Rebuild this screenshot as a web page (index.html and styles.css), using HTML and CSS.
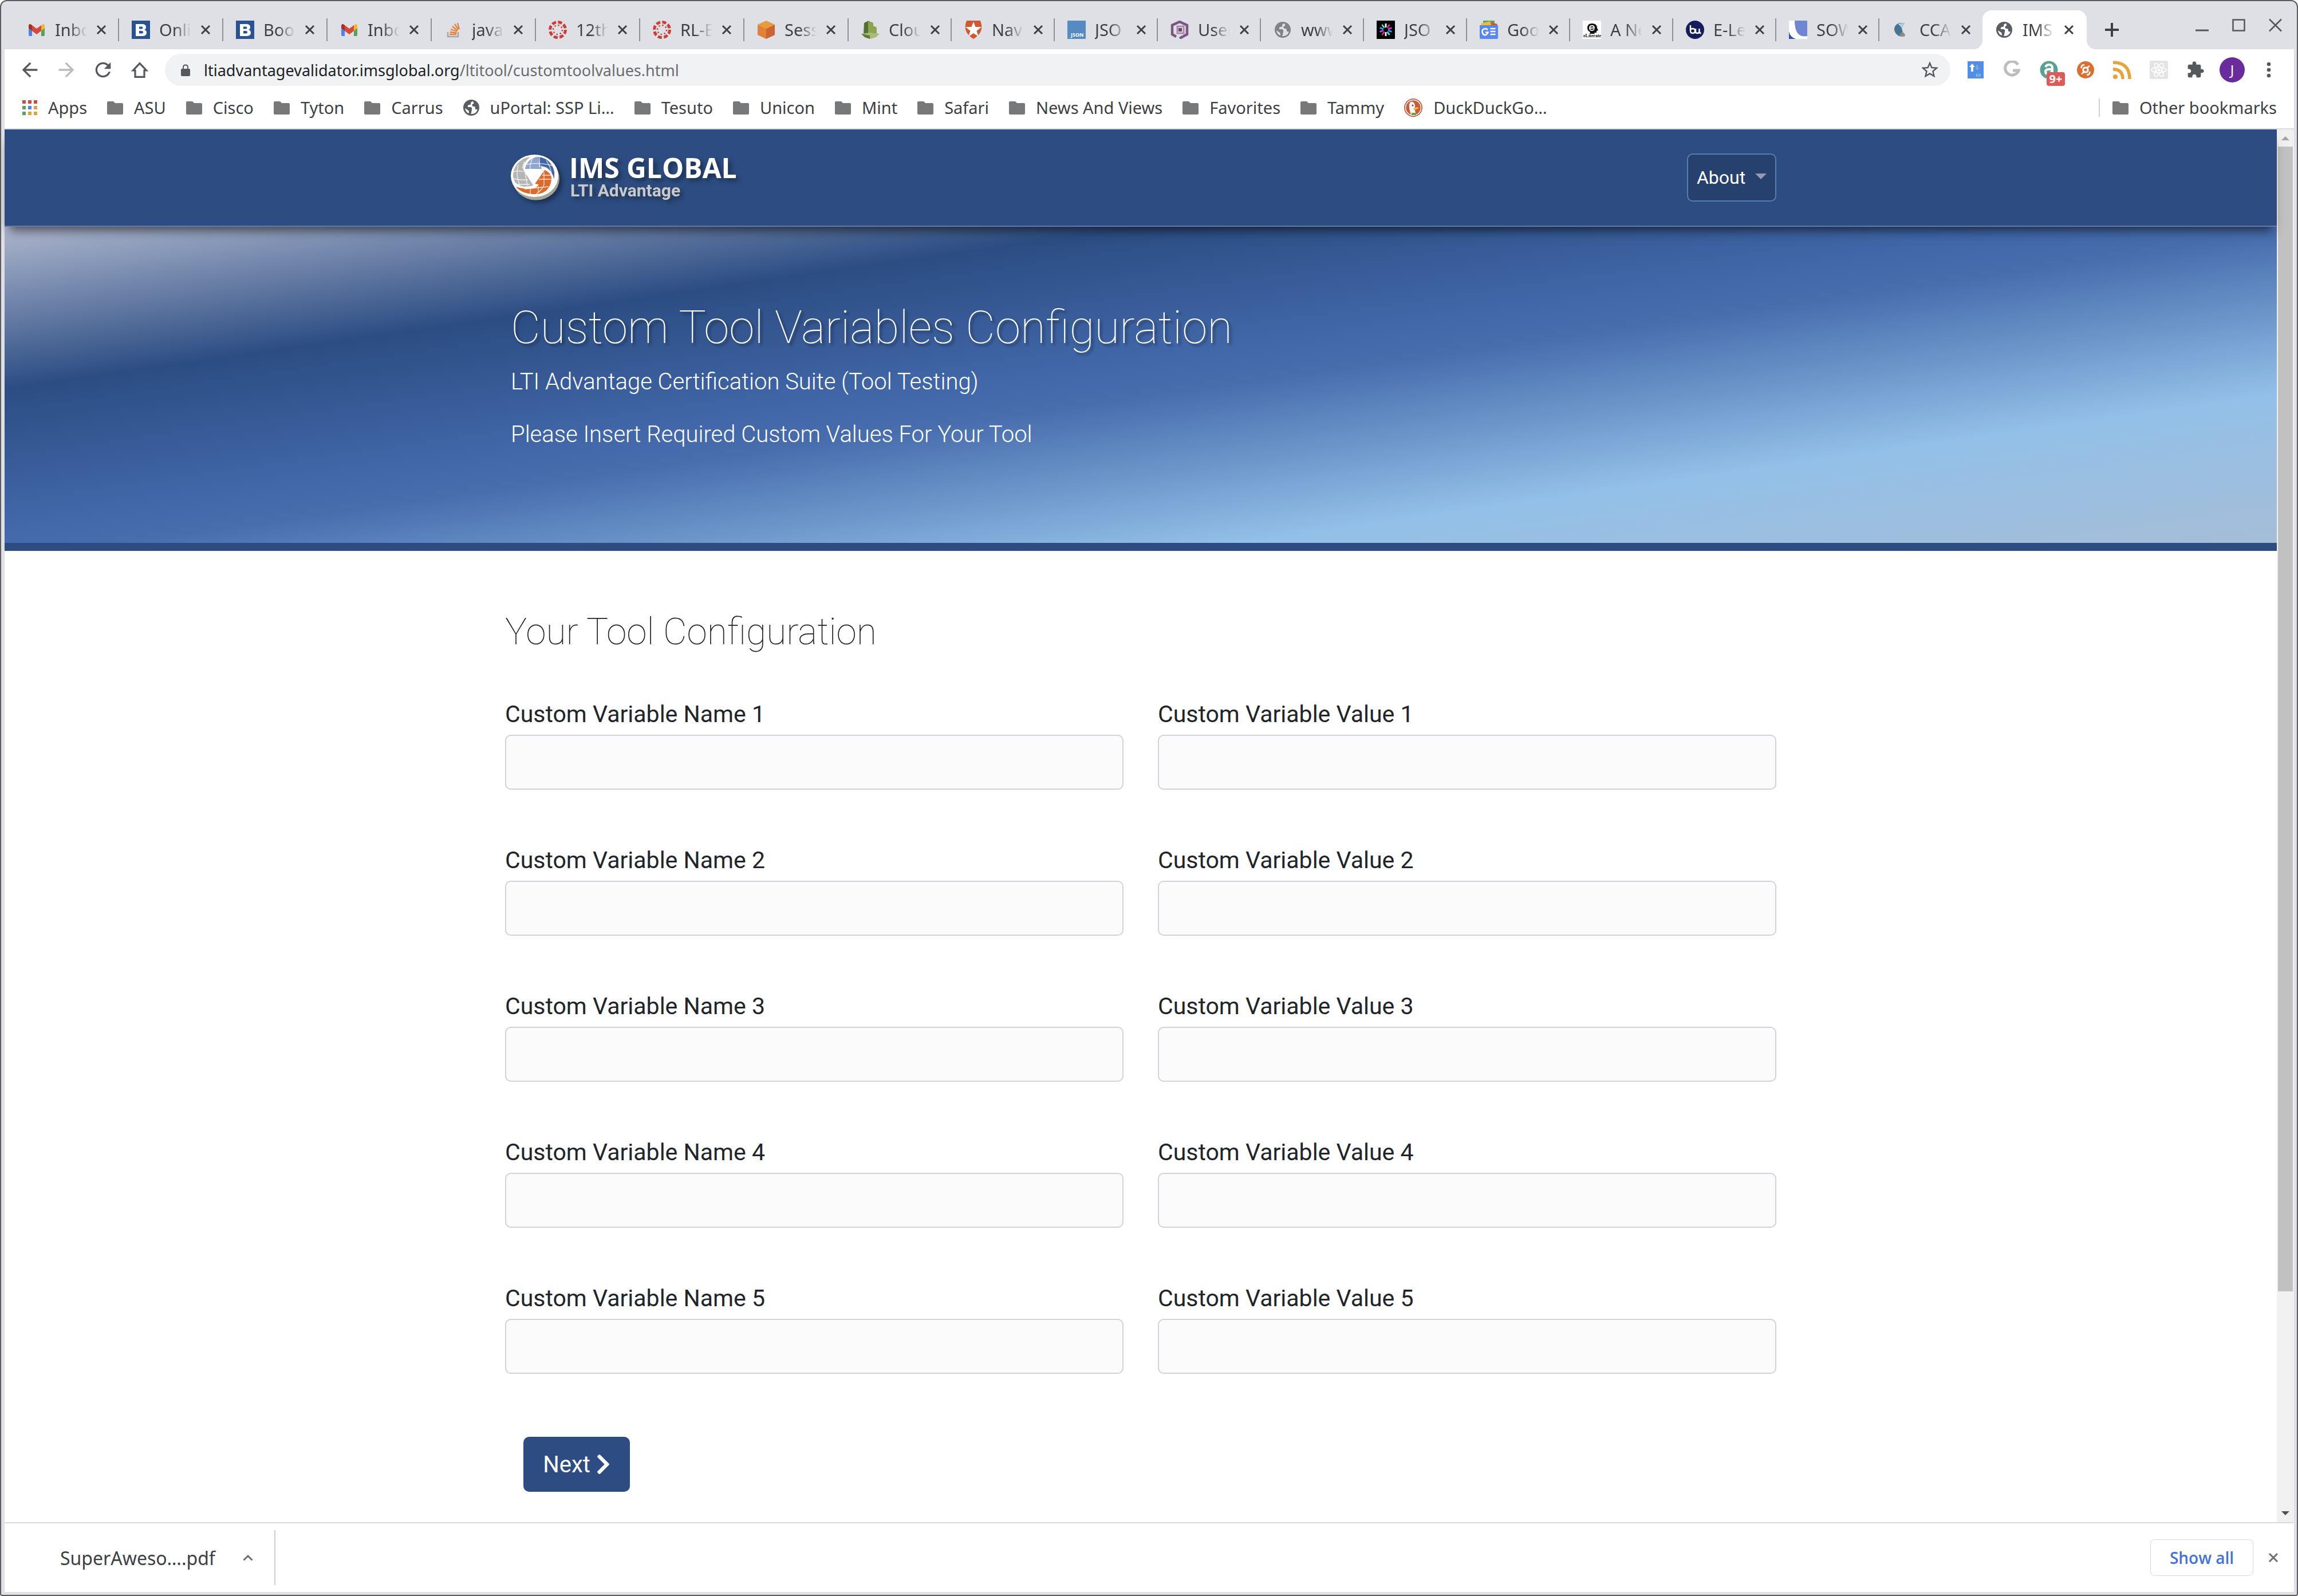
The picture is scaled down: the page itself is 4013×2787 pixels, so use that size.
FILE: index.html
```html
<!DOCTYPE html>
<html lang="en">
<head>
<meta charset="utf-8">
<title>IMS Global LTI Advantage</title>
<link rel="stylesheet" href="styles.css">
</head>
<body>
<svg class="defs" aria-hidden="true">
  <symbol id="x" viewBox="0 0 18 18"><path d="M2 2l14 14M16 2L2 16" stroke="currentColor" stroke-width="3" fill="none"/></symbol>
  <symbol id="gmail" viewBox="0 0 32 32"><path d="M2 8v17q0 2 2 2h4V13z" fill="#4f83ee"/><path d="M30 8v17q0 2-2 2h-4V13z" fill="#58a15a"/><path d="M24 8l3-2q3 0 3 3v4l-6 5z" fill="#ecb92f"/><path d="M8 8L5 6Q2 6 2 9v4l6 5z" fill="#b02a23"/><path d="M8 8l8 6 8-6v10l-8 6-8-6z" fill="#d44a3c"/></symbol>
  <symbol id="bb" viewBox="0 0 32 32"><path d="M0 0h32v32H0z" fill="#2b5290"/><path fill-rule="evenodd" d="M7 6h11q7 0 7 5.500 0 3.500-3 4.500 4 1 4 5 0 6-8 6H7zM13 10.500v4h4q2.500 0 2.500-2t-2.500-2zM13 18v4.500h4q3 0 3-2.200T17 18z" fill="#fff"/></symbol>
  <symbol id="so" viewBox="0 0 32 32"><path d="M6 20v8h18v-8" stroke="#a3a6ab" stroke-width="2.500" fill="none"/><path d="M9 24h12M9.500 20l12 1.500M11 15l11 4M14 10l9 7.500M18 6l6.500 9.500M23 4l3 11" stroke="#e0853a" stroke-width="2.300"/></symbol>
  <symbol id="canvas" viewBox="0 0 32 32"><circle cx="16" cy="16" r="13.500" fill="none" stroke="#c93f35" stroke-width="5" stroke-dasharray="7.200 3.400"/><circle cx="16" cy="16" r="8" fill="none" stroke="#c93f35" stroke-width="2.500" stroke-dasharray="2.500 3.780"/></symbol>
  <symbol id="aws" viewBox="0 0 32 32"><path d="M16 0l15 7-15 7L1 7z" fill="#e99a3c"/><path d="M1 7l15 7v18L1 25z" fill="#df8136"/><path d="M31 7l-15 7v18l15-7z" fill="#cd6330"/></symbol>
  <symbol id="cloud9" viewBox="0 0 32 32"><path d="M5 4l8-4v24l-9-1z" fill="#56702f"/><path d="M12 0l9 4v5l6 3v12H12z" fill="#8aa64f"/><path d="M0 23l15-2 17 2-6 6-10 3-9-3z" fill="#a9bd7b"/><path d="M0 23l15 3v6l-9-3z" fill="#5f7a36"/></symbol>
  <symbol id="auth0" viewBox="0 0 32 32"><path d="M4 0h24q8 20-12 32Q-4 20 4 0z" fill="#d4582f"/><path d="M16 2l3.500 9H30l-8.500 7 3.500 10-9-6-9 6 3.500-10L2 11h10.500z" fill="#fff"/></symbol>
  <symbol id="hex" viewBox="0 0 32 32"><path d="M10 28L3 24V8l13-6 13 6v16l-13 7" fill="none" stroke="#7c5683" stroke-width="4.500"/><path d="M12 10h11v12H12z" fill="none" stroke="#a98bab" stroke-width="3"/><path d="M14 13h6v6h-6z" fill="#7a3d68"/></symbol>
  <symbol id="globe" viewBox="0 0 28 28"><circle cx="14" cy="14" r="14" fill="currentColor"/><path d="M17 3q-3 0-4 3 1 3-2 3-4 0-3 4h5q3 1 2 4l-1 6-1 2q9 1 12-8-3 1-4-1-1-3 0-4-3 1-5-1-2-3 2-4 1-1-1-4z" fill="var(--bg)"/><path d="M3 15l6 4q1 1 1 5-6-2-7-9z" fill="var(--bg)"/></symbol>
  <symbol id="jwt" viewBox="0 0 32 32"><path d="M0 0h32v32H0z" fill="#000"/><g stroke-width="2.800"><path d="M16 5v7M16 20v7" stroke="#fff"/><path d="M22.500 7l-4 5.500M9.500 25l4-5.500" stroke="#e0306b"/><path d="M26.500 12.500L20 15M5.500 19.500L12 17" stroke="#d63aff"/><path d="M26.500 19.500L20 17M5.500 12.500L12 15" stroke="#29a8e8"/><path d="M22.500 25l-4-5.500M9.500 7l4 5.500" stroke="#3fe5d8"/></g></symbol>
  <symbol id="gnews" viewBox="0 0 32 32"><path d="M6 0h20v9H6z" fill="#5ba25c"/><path d="M2 5l16-4 3 10H4z" fill="#ecbd3c"/><path d="M20 3l11 3-2 5h-9z" fill="#d8503f"/><path d="M0 8h32v22q0 2-2 2H2q-2 0-2-2z" fill="#5a87ee"/><path d="M18.500 14h9M18.500 19h9M18.500 24h9" stroke="#fff" stroke-width="2.600"/><path d="M14 16q-3-3-6.500-1.500T4.500 20t4 5 6-4.500H10" stroke="#fff" stroke-width="2.500" fill="none"/></symbol>
  <symbol id="bu" viewBox="0 0 32 32"><circle cx="16" cy="16" r="16" fill="#141c5c"/><path d="M8 8v10q0 4 4 4t4-4-4-4-4 3M17 14v5q0 3 3 3t3.500-3v-5 5q0 3 3 3" fill="none" stroke="#fff" stroke-width="2.400"/></symbol>
  <symbol id="sow" viewBox="0 0 32 32"><path d="M0 0h32v32H0z" fill="#fff"/><path d="M10 0h22v27q-22 4-22-27z" fill="#6f86d3"/><path d="M0 19q2 10 12 13H0z" fill="#3350aa"/></symbol>
  <symbol id="cc" viewBox="0 0 32 32"><path d="M12 4l10 0-5 9 2 8-7 6Q4 22 4 15T12 4z" fill="#47748e"/><path d="M10 5l12-1-5 9q-4-5-7-8z" fill="#a9d0e8"/><path d="M12 27l5-7q6 1 6 7-5 2-11 0z" fill="#8f8b8c"/></symbol>
  <symbol id="folder" viewBox="0 0 28 23"><path d="M2 0h9l3 3h12q2 0 2 2v16q0 2-2 2H2q-2 0-2-2V2q0-2 2-2z" fill="#777879"/></symbol>
</svg>

<div class="browser">
  <header class="chrome">
    <div class="tabstrip">
      <nav class="tabs" aria-label="Open tabs">
        <div class="tab"><a href="#"><svg><use href="#gmail"/></svg><span>Inbo</span></a><button aria-label="Close"><svg><use href="#x"/></svg></button></div>
        <div class="tab"><a href="#"><svg><use href="#bb"/></svg><span>Onlin</span></a><button aria-label="Close"><svg><use href="#x"/></svg></button></div>
        <div class="tab"><a href="#"><svg><use href="#bb"/></svg><span>Boo</span></a><button aria-label="Close"><svg><use href="#x"/></svg></button></div>
        <div class="tab"><a href="#"><svg><use href="#gmail"/></svg><span>Inbo</span></a><button aria-label="Close"><svg><use href="#x"/></svg></button></div>
        <div class="tab"><a href="#"><svg><use href="#so"/></svg><span>java</span></a><button aria-label="Close"><svg><use href="#x"/></svg></button></div>
        <div class="tab"><a href="#"><svg><use href="#canvas"/></svg><span>12th</span></a><button aria-label="Close"><svg><use href="#x"/></svg></button></div>
        <div class="tab"><a href="#"><svg><use href="#canvas"/></svg><span>RL-E</span></a><button aria-label="Close"><svg><use href="#x"/></svg></button></div>
        <div class="tab"><a href="#"><svg><use href="#aws"/></svg><span>Sess</span></a><button aria-label="Close"><svg><use href="#x"/></svg></button></div>
        <div class="tab tab-slim"><a href="#"><svg><use href="#cloud9"/></svg><span>Clou</span></a><button aria-label="Close"><svg><use href="#x"/></svg></button></div>
        <div class="tab tab-slim"><a href="#"><svg><use href="#auth0"/></svg><span>Nav</span></a><button aria-label="Close"><svg><use href="#x"/></svg></button></div>
        <div class="tab tab-slim"><a href="#"><svg viewBox="0 0 32 32"><path d="M0 0h32v32H0z" fill="#548cc1"/><text x="6" y="28" font-family="Open Sans, sans-serif" font-weight="700" font-size="9" fill="#fff">JSON</text></svg><span>JSO</span></a><button aria-label="Close"><svg><use href="#x"/></svg></button></div>
        <div class="tab tab-slim"><a href="#"><svg><use href="#hex"/></svg><span>User</span></a><button aria-label="Close"><svg><use href="#x"/></svg></button></div>
        <div class="tab tab-slim"><a href="#"><svg class="globe globe-tab"><use href="#globe"/></svg><span>www</span></a><button aria-label="Close"><svg><use href="#x"/></svg></button></div>
        <div class="tab tab-slim"><a href="#"><svg><use href="#jwt"/></svg><span>JSO</span></a><button aria-label="Close"><svg><use href="#x"/></svg></button></div>
        <div class="tab tab-slim"><a href="#"><svg><use href="#gnews"/></svg><span>Goo</span></a><button aria-label="Close"><svg><use href="#x"/></svg></button></div>
        <div class="tab tab-slim"><a href="#"><svg viewBox="0 0 32 32"><path d="M0 0h32v32H0z" fill="#fff"/><path d="M16 5q9 0 9 8l2 4-3 1v3h-4l1 2h-9l1-3q-5-2-5-7 0-8 8-8z" fill="#111"/><path d="M12 13h8q0-4-4-4t-4 4 4 4q3 0 4-2" fill="none" stroke="#fff" stroke-width="1.800"/><text x="1" y="29" font-family="Liberation Serif, serif" font-weight="700" font-size="8" fill="#111">eLiterate</text></svg><span>A Ne</span></a><button aria-label="Close"><svg><use href="#x"/></svg></button></div>
        <div class="tab tab-slim"><a href="#"><svg><use href="#bu"/></svg><span>E-Le</span></a><button aria-label="Close"><svg><use href="#x"/></svg></button></div>
        <div class="tab tab-slim"><a href="#"><svg><use href="#sow"/></svg><span>SOW</span></a><button aria-label="Close"><svg><use href="#x"/></svg></button></div>
        <div class="tab tab-slim tab-last"><a href="#"><svg><use href="#cc"/></svg><span>CCA</span></a><button aria-label="Close"><svg><use href="#x"/></svg></button></div>
        <div class="tab tab-active"><a href="#"><svg class="globe globe-active"><use href="#globe"/></svg><span>IMS</span></a><button aria-label="Close"><svg><use href="#x"/></svg></button></div>
      </nav>
      <button class="newtab" aria-label="New tab"><svg viewBox="0 0 24 24"><path d="M12 0v24M0 12h24" stroke="#3c3f43" stroke-width="4"/></svg></button>
      <div class="wincontrols">
        <button aria-label="Minimize"><svg viewBox="0 0 24 24"><path d="M0 21h23" stroke="#54575b" stroke-width="3"/></svg></button>
        <button aria-label="Maximize"><svg viewBox="0 0 24 24"><path d="M1.500 2.500h20v19h-20z" stroke="#54575b" stroke-width="2.500" fill="none"/></svg></button>
        <button aria-label="Close window"><svg viewBox="0 0 24 24"><path d="M1 1.500l21 21M22 1.500l-21 21" stroke="#54575b" stroke-width="2.500"/></svg></button>
      </div>
    </div>

    <div class="toolbar">
      <button aria-label="Back"><svg class="ico" viewBox="0 0 24 24"><path fill="#55585c" d="M20 11H7.830l5.590-5.590L12 4l-8 8 8 8 1.410-1.410L7.830 13H20v-2z"/></svg></button>
      <button aria-label="Forward"><svg class="ico" viewBox="0 0 24 24"><path fill="#b9bbbe" d="M12 4l-1.410 1.410L16.170 11H4v2h12.170l-5.580 5.590L12 20l8-8z"/></svg></button>
      <button aria-label="Reload"><svg class="ico" viewBox="0 0 24 24"><path fill="#55585c" d="M17.650 6.350C16.200 4.900 14.210 4 12 4c-4.420 0-7.990 3.580-7.990 8s3.570 8 7.990 8c3.730 0 6.840-2.550 7.730-6h-2.080c-.82 2.330-3.040 4-5.650 4-3.310 0-6-2.690-6-6s2.690-6 6-6c1.660 0 3.140.69 4.220 1.780L13 11h7V4l-2.350 2.350z"/></svg></button>
      <button aria-label="Home"><svg class="ico" viewBox="0 0 24 24"><path fill="none" stroke="#55585c" stroke-width="1.900" d="M12 5.200L5 12.600h2.200v6.800h9.600v-6.800H19z"/></svg></button>
      <div class="omnibox">
        <svg class="lock" viewBox="0 0 16 21"><path d="M4 9V5.500q0-4 4-4t4 4V9" fill="none" stroke="#55585c" stroke-width="2"/><rect y="8" width="16" height="13" rx="2" fill="#55585c"/></svg>
        <div class="url" role="textbox" aria-label="Address"><span>ltiadvantagevalidator.imsglobal.org</span>/ltitool/customtoolvalues.html</div>
        <button aria-label="Bookmark this page"><svg class="star" viewBox="0 0 24 24"><path fill="#55585c" d="M22 9.240l-7.190-.62L12 2 9.190 8.630 2 9.240l5.460 4.730L5.820 21 12 17.270 18.180 21l-1.630-7.030L22 9.240zM12 15.400l-3.760 2.270 1-4.280-3.320-2.880 4.380-.38L12 6.100l1.710 4.040 4.380.38-3.320 2.880 1 4.280L12 15.400z"/></svg></button>
      </div>
      <button aria-label="Sort extension"><svg class="ext" viewBox="0 0 32 32"><path d="M2 1h28v30H2z" fill="#4f8fe8"/><path d="M8 19V11H5l5-6 5 6h-3v8z" fill="#fff"/><path d="M17 7h3v5h3l-4 5-4-5h2z" fill="#8aa4bd"/><text x="16" y="28" font-family="Open Sans, sans-serif" font-size="8" fill="#cfe0fa">EX</text></svg></button>
      <button aria-label="G extension"><svg class="ext" viewBox="0 0 32 32"><path d="M26 7A12 12 0 1 0 27 17H17" fill="none" stroke="#bdbdbd" stroke-width="5"/></svg></button>
      <button class="badged" aria-label="Honey extension"><svg class="ext" viewBox="0 0 32 32"><circle cx="16" cy="16" r="15.500" fill="#57a293"/><path d="M10 11q2-4 6-4 6 0 6 6v11M21 15q-11-1-11 4 0 4 4 4 6 0 7-5" fill="none" stroke="#fff" stroke-width="4"/></svg><span class="badge">9+</span></button>
      <button aria-label="Circle extension"><svg class="ext" viewBox="0 0 32 32"><circle cx="16" cy="16" r="15" fill="#db6f2f"/><rect x="12" y="12" width="8" height="8" rx="3" fill="none" stroke="#fff" stroke-width="3"/><path d="M8 13l2-5 4-1M24 19l-2 5-4 1M9 23l4-3M23 9l-4 3" fill="none" stroke="#fff" stroke-width="2.500"/></svg></button>
      <button aria-label="Feed"><svg class="ext" viewBox="0 0 32 32"><circle cx="4" cy="28" r="4" fill="#e6a33c"/><path d="M0 15q17 0 17 17M0 3q29 0 29 29" fill="none" stroke="#e6a33c" stroke-width="5.500"/></svg></button>
      <button aria-label="React tools"><svg class="ext" viewBox="0 0 32 32"><rect width="32" height="32" rx="2" fill="#e3e3e3"/><g fill="none" stroke="#fff" stroke-width="1.600"><ellipse cx="16" cy="16" rx="13" ry="5"/><ellipse cx="16" cy="16" rx="13" ry="5" transform="rotate(60 16 16)"/><ellipse cx="16" cy="16" rx="13" ry="5" transform="rotate(120 16 16)"/></g><circle cx="16" cy="16" r="2.500" fill="#fff"/></svg></button>
      <button aria-label="Extensions"><svg class="ext" viewBox="0 0 24 24"><path fill="#55585c" d="M20.500 11H19V7c0-1.100-.9-2-2-2h-4V3.500C13 2.120 11.880 1 10.500 1S8 2.120 8 3.500V5H4c-1.100 0-1.990.9-1.990 2v3.800H3.500c1.490 0 2.700 1.210 2.700 2.700s-1.210 2.700-2.700 2.700H2V20c0 1.100.9 2 2 2h3.800v-1.500c0-1.490 1.210-2.700 2.700-2.700 1.490 0 2.700 1.210 2.700 2.700V22H17c1.100 0 2-.9 2-2v-4h1.500c1.380 0 2.500-1.120 2.500-2.500S21.880 11 20.500 11z"/></svg></button>
      <button aria-label="Profile"><span class="avatar">J</span></button>
      <button aria-label="Menu"><svg class="ext" viewBox="0 0 32 32"><circle cx="16" cy="6" r="3.300" fill="#55585c"/><circle cx="16" cy="16" r="3.300" fill="#55585c"/><circle cx="16" cy="26" r="3.300" fill="#55585c"/></svg></button>
    </div>

    <nav class="bookmarks" aria-label="Bookmarks">
      <a href="#"><svg class="apps" viewBox="0 0 26 26"><path d="M0 0h6v6H0zM10 0h6v6h-6zM20 0h6v6h-6z" fill="#d9453b"/><path d="M0 10h6v6H0zM0 20h6v6H0z" fill="#5ba25c"/><path d="M10 10h6v6h-6z" fill="#4f83ee"/><path d="M20 10h6v6h-6zM10 20h6v6h-6zM20 20h6v6h-6z" fill="#dfa13a"/></svg>Apps</a>
      <a href="#"><svg class="folder"><use href="#folder"/></svg>ASU</a>
      <a href="#"><svg class="folder"><use href="#folder"/></svg>Cisco</a>
      <a href="#"><svg class="folder"><use href="#folder"/></svg>Tyton</a>
      <a href="#"><svg class="folder"><use href="#folder"/></svg>Carrus</a>
      <a href="#"><svg class="globe"><use href="#globe"/></svg>uPortal: SSP Li…</a>
      <a href="#"><svg class="folder"><use href="#folder"/></svg>Tesuto</a>
      <a href="#"><svg class="folder"><use href="#folder"/></svg>Unicon</a>
      <a href="#"><svg class="folder"><use href="#folder"/></svg>Mint</a>
      <a href="#"><svg class="folder"><use href="#folder"/></svg>Safari</a>
      <a href="#"><svg class="folder"><use href="#folder"/></svg>News And Views</a>
      <a href="#"><svg class="folder"><use href="#folder"/></svg>Favorites</a>
      <a href="#"><svg class="folder"><use href="#folder"/></svg>Tammy</a>
      <a href="#"><svg class="duck" viewBox="0 0 32 32"><circle cx="16" cy="16" r="16" fill="#cb5b38"/><circle cx="16" cy="16" r="13.500" fill="none" stroke="#fff" stroke-width="1.500"/><path d="M12 28Q8 16 9 10q2-6 6-4 4 2 4 7l-1 5 3 10q-5 2-9 0z" fill="#fff"/><path d="M16 17q5-3 10-1-3 3-9 4z" fill="#f0c230"/><path d="M13 25h8v4h-8z" fill="#63a648"/><circle cx="15" cy="12" r="1.500" fill="#2c4b7c"/></svg>DuckDuckGo…</a>
      <a class="other" href="#"><svg class="folder"><use href="#folder"/></svg>Other bookmarks</a>
    </nav>
  </header>

  <div class="viewport">
    <main class="page">
      <div class="navbar">
        <div class="container navrow">
          <a class="brand" href="#">
            <svg viewBox="0 0 86 80">
              <ellipse cx="44" cy="42" rx="41" ry="37.500" fill="#a3a596"/>
              <ellipse cx="41.500" cy="37" rx="41.500" ry="37" fill="#fff"/>
              <path d="M18 10Q4 20 4 38q2 16 20 18l12-1 3-2L22 27q-2-12 12-23-10 1-16 6z" fill="#b5b5b5"/>
              <path d="M25 25Q27 10 44 4q24 1 31 22l1 17q-4-13-13-20l-10-3 1 5z" fill="#8ea5d0"/>
              <path d="M48 4q22 2 28 26v12q-5-15-14-20l-10-3z" fill="#4466a8"/>
              <path d="M42 51l17-24q13 5 12 17-4 26-31 25-22-1-31-13 21 7 36 1l4-5z" fill="#dc6b2b"/>
              <path d="M5 30q8-3 17 0M5 42q12 3 25 2M9 52l24 0M13 18q-5 18 3 36M24 12l-4 12M25 32l4 22M27 17q22-4 45 2M50 4v18M38 7q-5 8-4 18M62 10q8 12 9 24M49 43h22M55 36h18M24 60l42-4M58 30v22q-2 9-14 17M34 59v9M48 55v12" fill="none" stroke="#fff" stroke-width="1.300" opacity=".8"/>
              <path d="M22 27h36L40 54z" fill="#fff"/>
            </svg>
            <span class="brandtext"><strong>IMS GLOBAL</strong><small>LTI Advantage</small></span>
          </a>
          <button class="about">About <i class="caret"></i></button>
        </div>
      </div>
      <section class="hero">
        <div class="container">
          <h1>Custom Tool Variables Configuration</h1>
          <p>LTI Advantage Certification Suite (Tool Testing)</p>
          <p>Please Insert Required Custom Values For Your Tool</p>
        </div>
      </section>
      <form class="container config">
        <h2>Your Tool Configuration</h2>
        <div class="fields">
          <div class="field"><label for="n1">Custom Variable Name 1</label><input id="n1" type="text"></div>
          <div class="field"><label for="v1">Custom Variable Value 1</label><input id="v1" type="text"></div>
          <div class="field"><label for="n2">Custom Variable Name 2</label><input id="n2" type="text"></div>
          <div class="field"><label for="v2">Custom Variable Value 2</label><input id="v2" type="text"></div>
          <div class="field"><label for="n3">Custom Variable Name 3</label><input id="n3" type="text"></div>
          <div class="field"><label for="v3">Custom Variable Value 3</label><input id="v3" type="text"></div>
          <div class="field"><label for="n4">Custom Variable Name 4</label><input id="n4" type="text"></div>
          <div class="field"><label for="v4">Custom Variable Value 4</label><input id="v4" type="text"></div>
          <div class="field"><label for="n5">Custom Variable Name 5</label><input id="n5" type="text"></div>
          <div class="field"><label for="v5">Custom Variable Value 5</label><input id="v5" type="text"></div>
        </div>
        <button class="next" type="button">Next <svg viewBox="0 0 320 512"><path fill="currentColor" d="M285.476 272.971L91.132 467.314c-9.373 9.373-24.569 9.373-33.941 0l-22.667-22.667c-9.357-9.357-9.375-24.522-.04-33.901L188.505 256 34.484 101.255c-9.335-9.379-9.317-24.544.04-33.901l22.667-22.667c9.373-9.373 24.569-9.373 33.941 0L285.475 239.030c9.373 9.372 9.373 24.568.001 33.941z"/></svg></button>
      </form>
    </main>
    <div class="scrollbar" aria-hidden="true"><i class="up"></i><i class="thumb"></i><i class="down"></i></div>
  </div>

  <footer class="downloads">
    <button class="file">SuperAweso….pdf<svg viewBox="0 0 18 12"><path d="M1.500 10.500L9 3l7.500 7.500" fill="none" stroke="#6e6f71" stroke-width="3"/></svg></button>
    <button class="showall">Show all</button>
    <button class="closebar" aria-label="Close downloads"><svg><use href="#x"/></svg></button>
  </footer>
</div>
</body>
</html>
```
FILE: styles.css
```css
* { box-sizing: border-box; }
body { margin: 0; background: #fff; font-family: Roboto, sans-serif; color: #212529; }
button { margin: 0; padding: 0; border: 0; background: none; font: inherit; color: inherit; display: flex; align-items: center; justify-content: center; }
a { color: inherit; text-decoration: none; }
svg { display: block; flex: none; }
.defs { position: absolute; width: 0; height: 0; }

.browser { min-height: 100vh; display: flex; flex-direction: column; background: #dfe0e6; border: 2px solid #5c5c5e; border-radius: 12px 12px 4px 4px; padding: 0 5px 5px 6px; }
.chrome { font-family: "Noto Sans", sans-serif; font-size: 29px; color: #3c3f43; }

.tabstrip { display: flex; height: 84px; padding: 16px 0 0 18px; }
.tabs { display: flex; min-width: 0; }
.tab { width: 182px; min-width: 0; display: flex; align-items: center; position: relative; padding-left: 22px; }
.tab-slim { width: 180px; }
.tab::after { content: ""; position: absolute; right: 0; top: 14px; width: 2px; height: 40px; background: #8f9196; }
.tab-last::after { display: none; }
.tab a { display: flex; align-items: center; gap: 16px; min-width: 0; }
.tab a svg { width: 32px; height: 32px; }
.tab span { width: 56px; overflow: hidden; white-space: nowrap; line-height: 40px; -webkit-mask-image: linear-gradient(to right, #000 45%, transparent); mask-image: linear-gradient(to right, #000 45%, transparent); }
.tab button { margin-left: 16px; }
.tab button svg { width: 18px; height: 18px; }
.tab-active { background: #fff; border-radius: 16px 16px 0 0; }
.tab-active::after, .tab-active::before { content: ""; position: absolute; display: block; top: auto; bottom: 0; width: 16px; height: 16px; }
.tab-active::before { left: -16px; background: radial-gradient(circle at 0 0, transparent 16px, #fff 16px); }
.tab-active::after { right: -16px; background: radial-gradient(circle at 100% 0, transparent 16px, #fff 16px); }
.globe { width: 28px; height: 28px; color: #5a5d61; --bg: #fff; }
.tab a .globe { width: 28px; height: 28px; margin: 2px; }
.globe-tab { color: #808285; --bg: #dfe0e6; }
.newtab { width: 88px; }
.newtab svg { width: 24px; height: 24px; }
.wincontrols { display: flex; margin-left: auto; padding-bottom: 16px; }
.wincontrols button { width: 64px; }
.wincontrols svg { width: 24px; height: 24px; }

.toolbar { display: flex; align-items: center; height: 72px; background: #fff; padding: 0 12px; }
.toolbar > button { width: 64px; height: 64px; }
.ico { width: 40px; height: 40px; }
.ext { width: 32px; height: 32px; }
.omnibox { flex: 1; height: 56px; margin: 0 12px; padding: 0 18px 0 28px; border-radius: 28px; background: #f0f2f4; display: flex; align-items: center; }
.lock { width: 16px; height: 21px; }
.url { flex: 1; margin-left: 24px; color: #6a6c6f; font-size: 27px; }
.url span { color: #202124; }
.star { width: 36px; height: 36px; }
.badged { position: relative; }
.badge { position: absolute; left: 28px; top: 36px; width: 32px; height: 24px; border-radius: 4px; background: #df5a57; color: #fff; font: 700 20px/24px "Open Sans", sans-serif; text-align: center; }
.avatar { width: 44px; height: 44px; border-radius: 50%; background: #6a2c9c; color: #fff; font: 24px/44px "Noto Sans", sans-serif; text-align: center; }

.bookmarks { display: flex; align-items: center; gap: 35px; height: 68px; padding: 0 30px 6px 31px; background: #fff; border-bottom: 2px solid #d9dbe0; white-space: nowrap; }
.bookmarks a { display: flex; align-items: center; gap: 19px; line-height: 32px; }
.apps { width: 26px; height: 26px; }
.folder { width: 28px; height: 23px; }
.duck { width: 32px; height: 32px; }
.bookmarks .other { margin-left: auto; padding-left: 22px; border-left: 2px solid #d0d2d6; }

.viewport { flex: 1; display: flex; background: #fff; }
.page { flex: 1; min-width: 0; }
.container { width: 100%; max-width: 2220px; margin: 0 auto; }
.navbar { position: relative; height: 170px; background: #2d4d82; border-bottom: 2px solid #6579a5; box-shadow: 0 14px 18px -8px rgba(0, 0, 0, .6); }
.navrow { height: 100%; display: flex; align-items: center; justify-content: space-between; }
.brand { display: flex; align-items: center; gap: 16px; padding-left: 10px; filter: drop-shadow(5px 5px 4px rgba(0, 0, 0, .4)); }
.brand svg { width: 86px; height: 80px; }
.brandtext { display: flex; flex-direction: column; white-space: nowrap; }
.brandtext strong { font: 700 48px/46px "Open Sans", sans-serif; color: #fff; }
.brandtext small { font: 700 30px/34px Roboto, sans-serif; color: #c9c9c9; padding-left: 2px; }
.about { width: 156px; height: 84px; border: 2px solid #557fae; border-radius: 10px; background: #27416f; color: #fff; font-size: 32px; gap: 17px; }
.caret { flex: none; width: 20px; border: solid transparent; border-width: 10px 10px 0; border-top-color: #909cb5; margin-bottom: 4px; }

.hero { padding: 128px 0 159px; border-bottom: 14px solid #2d4d82; background: linear-gradient(to bottom right, #aeb7ce, #2c4d83 25%, #4268aa 46%, #476dad 51%, #93c0e8 76%, #a6bdd6); background-origin: border-box; color: #fff; }
.hero .container { padding-left: 10px; }
h1 { margin: 0 0 17px; font-weight: 100; font-size: 80px; line-height: 96px; text-shadow: 4px 4px 4px rgba(0, 0, 0, .4); }
.hero p { margin: 0 0 32px; font-weight: 300; font-size: 40px; line-height: 60px; }
.hero p:last-child { margin: 0; }

.config { padding: 103px 0 53px; }
h2 { margin: 0 0 75px; font-weight: 100; font-size: 64px; line-height: 77px; }
.fields { display: grid; grid-template-columns: 1fr 1fr; gap: 93px 60px; }
.field { display: flex; flex-direction: column; gap: 6px; }
.field label { font-size: 41px; line-height: 60px; }
.field input { width: 100%; height: 96px; border: 2px solid #ced4da; border-radius: 10px; background: #fbfbfb; padding: 0 24px; font: 40px Roboto, sans-serif; }
.next { margin: 110px 0 0 32px; width: 186px; height: 96px; border-radius: 10px; background: #2d4d82; color: #fff; font-size: 40px; gap: 10px; }
.next svg { width: 25px; height: 40px; }

.scrollbar { width: 30px; background: #f0f0f0; display: flex; flex-direction: column; align-items: center; padding: 12px 0; }
.scrollbar i { display: block; }
.up { border: solid transparent; border-width: 0 7px 7px; border-bottom-color: #a3a3a3; }
.thumb { width: 26px; height: 83%; margin-top: 11px; background: #c1c1c1; }
.down { margin-top: auto; border: solid transparent; border-width: 7px 7px 0; border-top-color: #505050; }

.downloads { display: flex; align-items: center; height: 122px; border-top: 2px solid #d9dbe0; background: #fff; padding-right: 27px; font: 32px "Noto Sans", sans-serif; color: #3c3f43; }
.file { height: 96px; padding: 0 37px 0 97px; gap: 48px; border-right: 2px solid #cfcfcf; }
.file svg { width: 18px; height: 12px; }
.showall { margin-left: auto; width: 180px; height: 64px; border: 1px solid #d9dadd; border-radius: 8px; color: #4272dd; font-family: "Open Sans", sans-serif; font-weight: 600; font-size: 28px; }
.closebar { margin-left: 26px; color: #6e6f71; }
.closebar svg { width: 18px; height: 18px; }
```
